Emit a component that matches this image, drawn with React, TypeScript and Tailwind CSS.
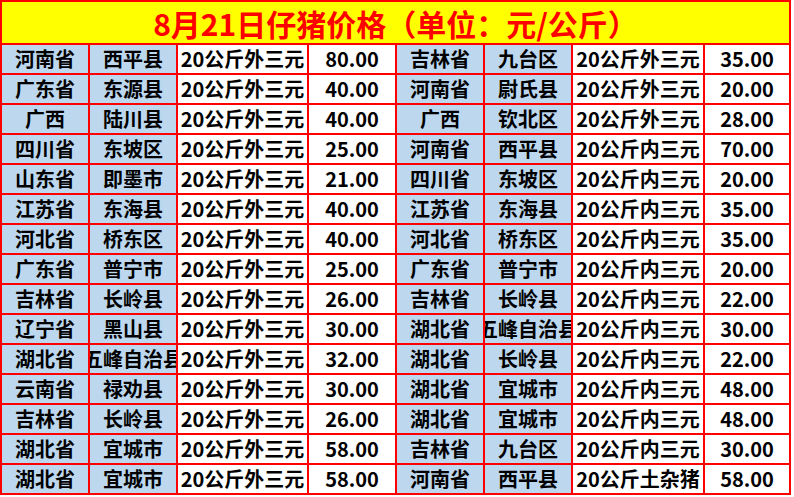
// 仔猪价格表 — 两栏并排的 Excel 风格表格

type Row = [string, string, string, string];

const LEFT: Row[] = [
  ["河南省", "西平县", "20公斤外三元", "80.00"],
  ["广东省", "东源县", "20公斤外三元", "40.00"],
  ["广西", "陆川县", "20公斤外三元", "40.00"],
  ["四川省", "东坡区", "20公斤外三元", "25.00"],
  ["山东省", "即墨市", "20公斤外三元", "21.00"],
  ["江苏省", "东海县", "20公斤外三元", "40.00"],
  ["河北省", "桥东区", "20公斤外三元", "40.00"],
  ["广东省", "普宁市", "20公斤外三元", "25.00"],
  ["吉林省", "长岭县", "20公斤外三元", "26.00"],
  ["辽宁省", "黑山县", "20公斤外三元", "30.00"],
  ["湖北省", "五峰自治县", "20公斤外三元", "32.00"],
  ["云南省", "禄劝县", "20公斤外三元", "30.00"],
  ["吉林省", "长岭县", "20公斤外三元", "26.00"],
  ["湖北省", "宜城市", "20公斤外三元", "58.00"],
  ["湖北省", "宜城市", "20公斤外三元", "58.00"],
];

const RIGHT: Row[] = [
  ["吉林省", "九台区", "20公斤外三元", "35.00"],
  ["河南省", "尉氏县", "20公斤外三元", "20.00"],
  ["广西", "钦北区", "20公斤外三元", "28.00"],
  ["河南省", "西平县", "20公斤内三元", "70.00"],
  ["四川省", "东坡区", "20公斤内三元", "20.00"],
  ["江苏省", "东海县", "20公斤内三元", "35.00"],
  ["河北省", "桥东区", "20公斤内三元", "35.00"],
  ["广东省", "普宁市", "20公斤内三元", "20.00"],
  ["吉林省", "长岭县", "20公斤内三元", "22.00"],
  ["湖北省", "五峰自治县", "20公斤内三元", "30.00"],
  ["湖北省", "长岭县", "20公斤内三元", "22.00"],
  ["湖北省", "宜城市", "20公斤内三元", "48.00"],
  ["湖北省", "宜城市", "20公斤内三元", "48.00"],
  ["吉林省", "九台区", "20公斤内三元", "30.00"],
  ["河南省", "西平县", "20公斤土杂猪", "58.00"],
];

function Cell({ text, blue }: { text: string; blue: boolean }) {
  return (
    <div
      className={`h-[28px] flex items-center justify-center overflow-hidden whitespace-nowrap text-[20px] font-bold leading-none text-black ${
        blue ? "bg-[#bdd7ee]" : "bg-white"
      }`}
    >
      {text}
    </div>
  );
}

export default function App() {
  return (
    <div
      className="w-[794px] h-[497px] bg-white overflow-hidden"
      style={{ fontFamily: '"Noto Sans CJK SC", "Microsoft YaHei", sans-serif' }}
    >
      <div className="w-[791px] bg-[#ff0000] p-[2px] flex flex-col gap-[2px]">
        {/* Title */}
        <div className="h-[41px] bg-[#ffff00] flex items-center justify-center">
          <span className="text-[30px] font-bold text-[#ff0000] leading-none whitespace-nowrap">
            8月21日仔猪价格（单位：元/公斤）
          </span>
        </div>

        {/* Body */}
        <div className="grid grid-cols-[86px_86px_129px_86px_86px_86px_130px_84px] gap-[2px]">
          {LEFT.map((l, i) => {
            const r = RIGHT[i];
            return [
              <Cell key={`a${i}`} text={l[0]} blue />,
              <Cell key={`b${i}`} text={l[1]} blue />,
              <Cell key={`c${i}`} text={l[2]} blue={false} />,
              <Cell key={`d${i}`} text={l[3]} blue={false} />,
              <Cell key={`e${i}`} text={r[0]} blue />,
              <Cell key={`f${i}`} text={r[1]} blue />,
              <Cell key={`g${i}`} text={r[2]} blue={false} />,
              <Cell key={`h${i}`} text={r[3]} blue={false} />,
            ];
          })}
        </div>
      </div>
    </div>
  );
}
